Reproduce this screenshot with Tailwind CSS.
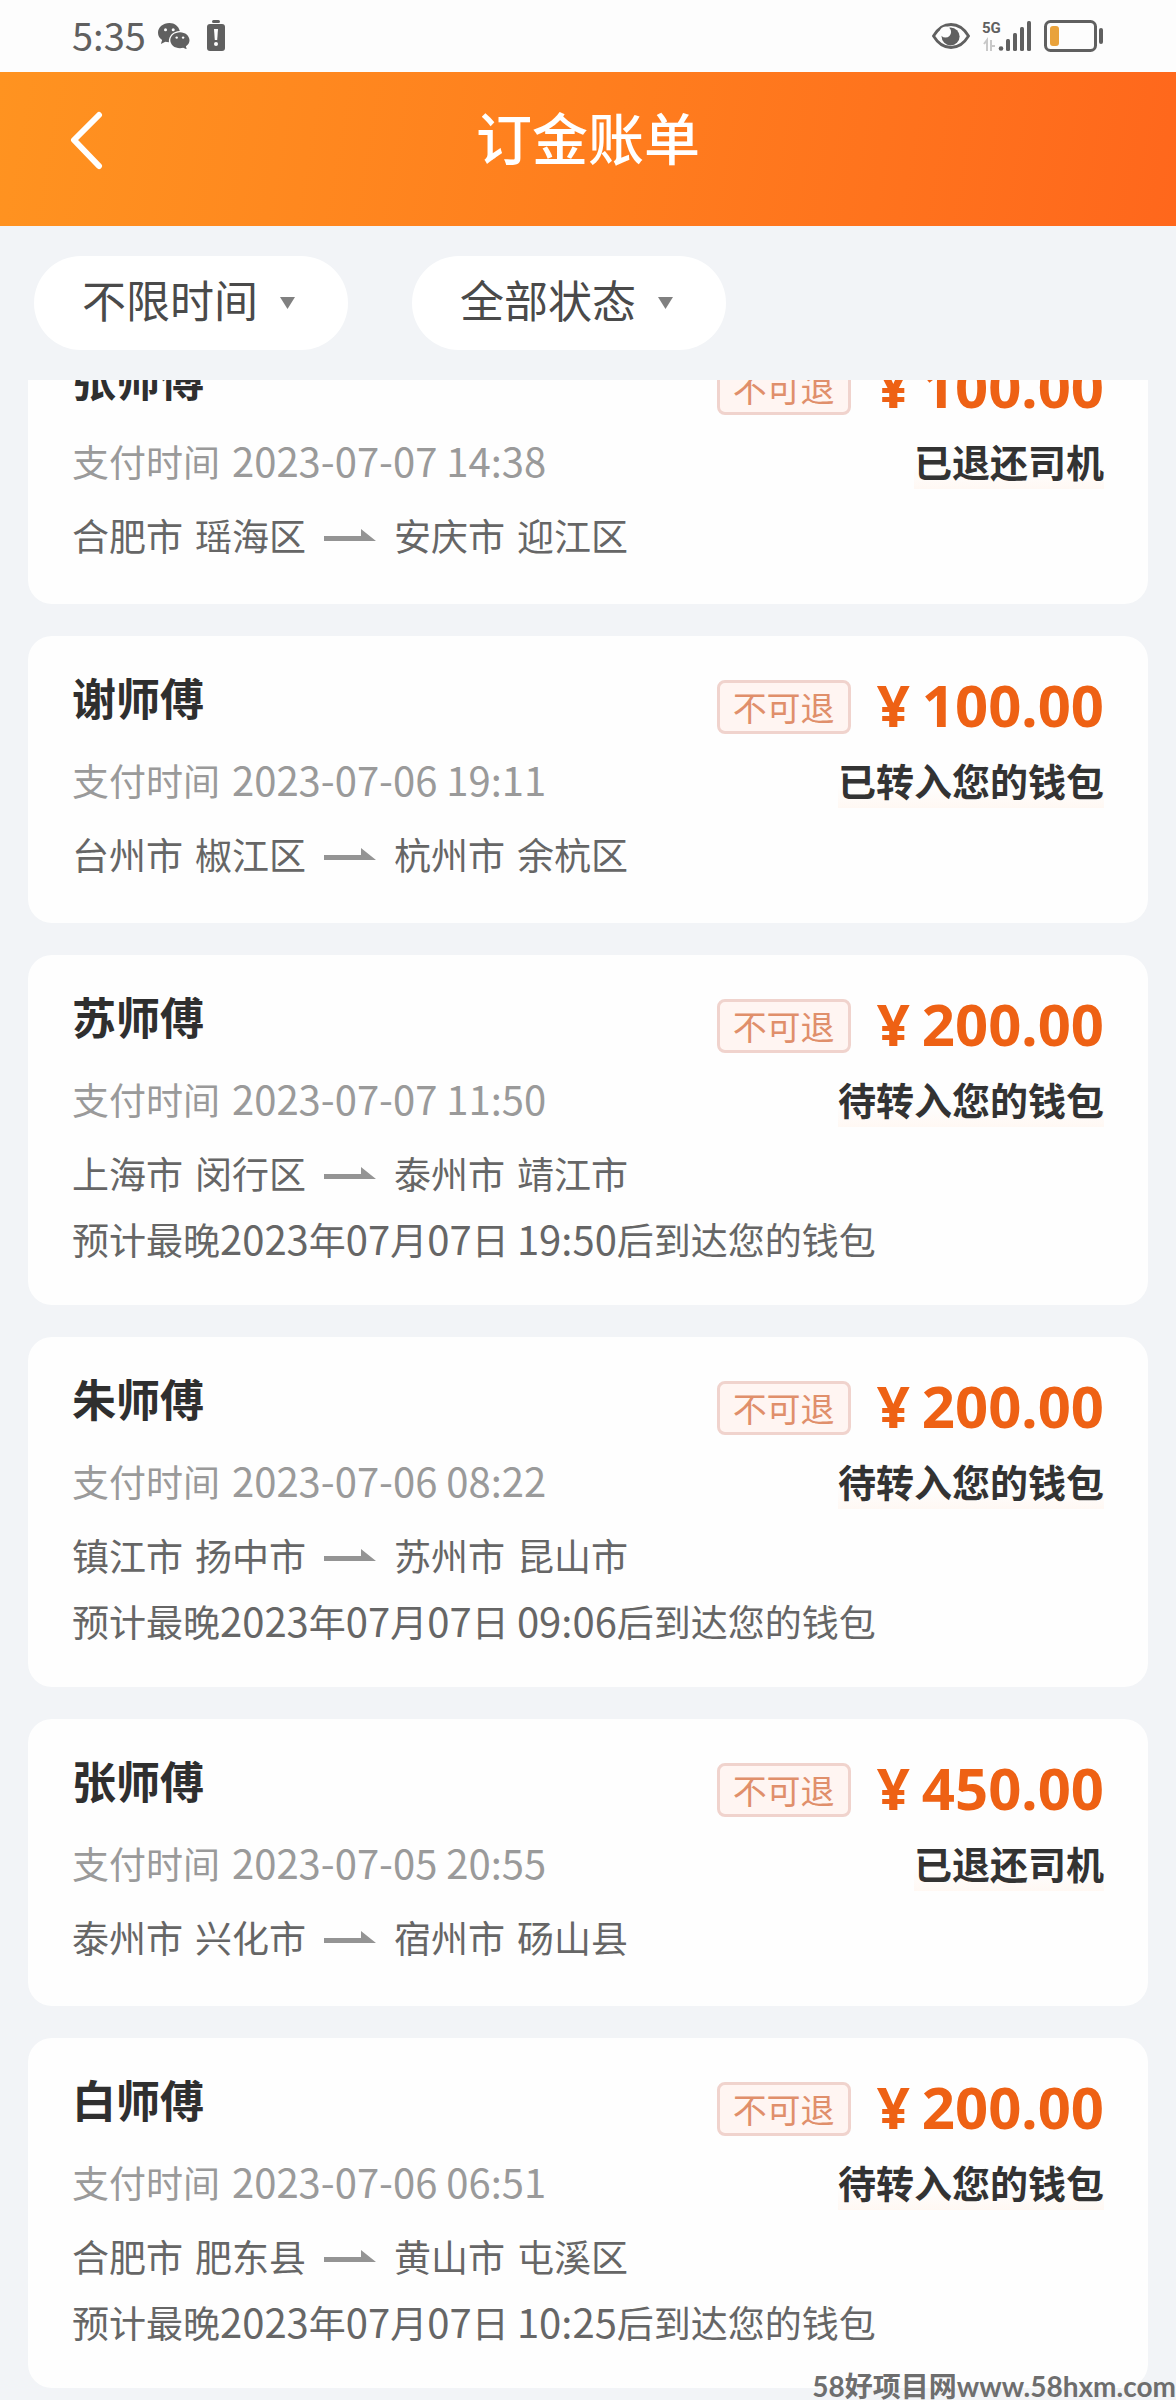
<!DOCTYPE html>
<html lang="zh-CN">
<head>
  <meta charset="UTF-8" />
  <meta name="viewport" content="width=device-width, initial-scale=1.0" />
  <title>订金账单</title>
  <script src="https://cdn.jsdelivr.net/npm/@tailwindcss/browser@4"></script>
</head>
<body class="relative min-h-screen overflow-x-hidden bg-[#f2f4f7] font-['Noto_Sans_CJK_SC',sans-serif] text-[#333]">
  <!-- status bar -->
  <div class="flex h-18 items-center justify-between bg-[#fdfdfd] px-18 text-[#606060]">
    <div class="flex items-center">
      <span class="pb-0.5 text-[38px] leading-[70px]">5:35</span>
      <svg class="ml-3 h-[26px] w-[32px]" viewBox="0 0 32 26" fill="currentColor">
        <path d="M11.500 0C5 0 0 4.300 0 9.700c0 3 1.600 5.600 4.100 7.300l-1.200 4 4.400-2.300c1.200.3 2.300.5 3.600.5C10.500 13 15 8.300 21.800 8.100 20.800 3.400 16.500 0 11.500 0z" />
        <path d="M31.500 17.200c0-4.400-4.300-8-9.500-8s-9.700 3.600-9.700 8 4.300 8 9.700 8c1.100 0 2.200-.2 3.200-.5l3.500 1.600-.8-3c2.200-1.500 3.600-3.700 3.600-6.100z" />
        <g fill="#fdfdfd"><circle cx="7.500" cy="6.700" r="1.500" /><circle cx="15.200" cy="6.700" r="1.500" /><circle cx="18.700" cy="14.600" r="1.200" /><circle cx="25.100" cy="14.600" r="1.200" /></g>
      </svg>
      <svg class="ml-4 h-[32px] w-[20px]" viewBox="0 0 20 32">
        <rect x="6" y="0" width="8" height="3" rx="1.500" fill="currentColor" />
        <rect x="1" y="4" width="18" height="27" rx="3" fill="currentColor" />
        <path d="M8 9h4l-.8 11H8.800z" fill="#fdfdfd" />
        <circle cx="10" cy="24" r="2" fill="#fdfdfd" />
      </svg>
    </div>
    <div class="flex items-center">
      <svg class="h-[28px] w-[38px]" viewBox="0 0 38 28">
        <path d="M1.500 14C6 6.500 12 2.500 19 2.500S32 6.500 36.500 14C32 21.500 26 25.500 19 25.500S6 21.500 1.500 14z" fill="none" stroke="currentColor" stroke-width="2.800" />
        <circle cx="18.600" cy="14.500" r="9" fill="currentColor" />
        <circle cx="13.500" cy="10" r="5.600" fill="#fdfdfd" />
      </svg>
      <svg class="ml-3 h-[32px] w-[50px]" viewBox="0 0 50 32">
        <text x="0" y="13" font-family="Roboto" font-weight="700" font-size="15" fill="currentColor">5G</text>
        <path d="M5 31V20l-3 4M9 20v11M9 26h4" fill="none" stroke="#c9c9c9" stroke-width="2" />
        <g fill="currentColor"><circle cx="19" cy="28.500" r="2.300" /><rect x="24" y="19" width="4" height="12" rx="1.500" /><rect x="31" y="13" width="4" height="18" rx="1.500" /><rect x="38" y="7" width="4" height="24" rx="1.500" /><rect x="45" y="1" width="4" height="30" rx="1.500" /></g>
      </svg>
      <svg class="ml-3 h-[32px] w-[60px]" viewBox="0 0 60 32">
        <rect x="1.500" y="1.500" width="50" height="29" rx="5" fill="none" stroke="currentColor" stroke-width="3" />
        <rect x="6" y="6" width="9" height="20" rx="3" fill="#e9a23b" />
        <rect x="55" y="8" width="4" height="16" rx="2" fill="currentColor" />
      </svg>
    </div>
  </div>

  <header class="grid h-[154px] grid-cols-[1fr_auto_1fr] items-center bg-linear-100 from-[#ff9320] to-[#ff671c] px-17 pb-[26px] text-white">
    <button type="button" aria-label="返回" class="w-fit">
      <svg class="mt-2 h-[60px] w-[36px]" viewBox="0 0 36 60" fill="none" stroke="currentColor" stroke-width="6" stroke-linecap="round" stroke-linejoin="round">
        <path d="M31 5 6 30l25 26" />
      </svg>
    </button>
    <h1 class="text-[56px] leading-[80px] font-medium">订金账单</h1>
  </header>

  <div class="flex gap-16 px-[34px] py-[30px] text-[44px] text-[#4a4a4a]">
    <div class="relative">
      <select aria-label="时间" class="h-[94px] w-[314px] appearance-none rounded-full bg-white pb-2 pl-12">
        <option>不限时间</option>
      </select>
      <svg class="pointer-events-none absolute top-[41px] right-[53px] h-[12px] w-[15px]" viewBox="0 0 15 12" fill="#808080"><path d="M0 0h15L7.500 12z" /></svg>
    </div>
    <div class="relative">
      <select aria-label="状态" class="h-[94px] w-[314px] appearance-none rounded-full bg-white pb-2 pl-12">
        <option>全部状态</option>
      </select>
      <svg class="pointer-events-none absolute top-[41px] right-[53px] h-[12px] w-[15px]" viewBox="0 0 15 12" fill="#808080"><path d="M0 0h15L7.500 12z" /></svg>
    </div>
  </div>

  <main class="overflow-hidden px-7 pb-[11px]">
    <ul id="billList" class="-mt-[63px] flex flex-col gap-8"></ul>
  </main>

  <div class="absolute right-0 bottom-0 font-['Lato','Noto_Sans_CJK_SC',sans-serif] text-[28px] leading-[28px] font-bold text-[#6e6e6e]">58好项目网www.58hxm.com</div>

  <script>
    const bills = [
      { name: "张师傅", amount: "100.00", time: "2023-07-07 14:38", status: "已退还司机", from: ["合肥市", "瑶海区"], to: ["安庆市", "迎江区"] },
      { name: "谢师傅", amount: "100.00", time: "2023-07-06 19:11", status: "已转入您的钱包", from: ["台州市", "椒江区"], to: ["杭州市", "余杭区"] },
      { name: "苏师傅", amount: "200.00", time: "2023-07-07 11:50", status: "待转入您的钱包", from: ["上海市", "闵行区"], to: ["泰州市", "靖江市"], arrive: "19:50" },
      { name: "朱师傅", amount: "200.00", time: "2023-07-06 08:22", status: "待转入您的钱包", from: ["镇江市", "扬中市"], to: ["苏州市", "昆山市"], arrive: "09:06" },
      { name: "张师傅", amount: "450.00", time: "2023-07-05 20:55", status: "已退还司机", from: ["泰州市", "兴化市"], to: ["宿州市", "砀山县"] },
      { name: "白师傅", amount: "200.00", time: "2023-07-06 06:51", status: "待转入您的钱包", from: ["合肥市", "肥东县"], to: ["黄山市", "屯溪区"], arrive: "10:25" }
    ];

    // 数字比汉字略大一号
    const num = text => `<span class="text-[40px] leading-none">${text}</span>`;

    const place = ([city, area]) => `<span class="flex gap-3"><span>${city}</span><span>${area}</span></span>`;

    document.getElementById("billList").innerHTML = bills.map(bill => `
      <li class="rounded-3xl bg-[#fefefe] px-11 pt-[30px] pb-[41px] text-[37px] leading-[56px] text-[#666]">
        <div class="flex items-start justify-between">
          <h2 class="text-[44px] leading-[62px] font-bold text-[#2f2f2f]">${bill.name}</h2>
          <div class="flex h-[78px] items-center">
            <span class="mt-1 rounded-lg border-3 border-[#f0d3cd] bg-[#fff5f2] px-[13px] text-[34px] leading-[48px] text-[#e08f6b]">不可退</span>
            <span class="ml-[26px] flex gap-3 font-['Noto_Sans',sans-serif] text-[58px] leading-[76px] font-bold text-[#ee6114]"><span>¥</span><span>${bill.amount}</span></span>
          </div>
        </div>
        <div class="mt-2 flex h-[56px] items-center justify-between">
          <p class="flex items-baseline gap-3 text-[#9a9a9a]">支付时间 ${num(bill.time)}</p>
          <p class="bg-linear-to-b from-transparent from-60% to-[#fff8f3] text-[38px] font-bold text-[#333]">${bill.status}</p>
        </div>
        <div class="mt-[18px] flex items-center gap-[18px]">
          ${place(bill.from)}
          <svg class="h-[12px] w-[52px]" viewBox="0 0 52 12" fill="#949494"><path d="M0 7h37V0l15 12H0z" /></svg>
          ${place(bill.to)}
        </div>
        ${bill.arrive ? `<p class="mt-3 h-[51px] leading-[53px]">预计最晚${num("2023")}年${num("07")}月${num("07")}日 ${num(bill.arrive)}后到达您的钱包</p>` : ""}
      </li>`).join("");
  </script>
</body>
</html>
